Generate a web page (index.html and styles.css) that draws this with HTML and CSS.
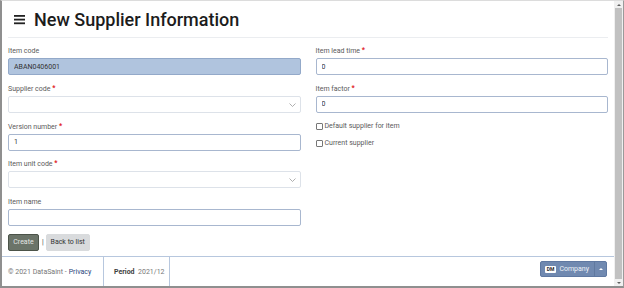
FILE: index.html
```html
<!DOCTYPE html>
<html lang="en">

<head>
    <meta charset="UTF-8">
    <meta name="viewport" content="width=device-width, initial-scale=1.0">
    <title>New Supplier Information</title>
    <link rel="stylesheet" href="styles.css">
</head>

<body>
    <div class="window">
        <div class="page">
            <div class="content">
                <header class="page-header">
                    <svg class="menu-icon" viewBox="0 0 11 10" aria-hidden="true">
                        <rect x="0" y="0" width="11" height="1.8" fill="#222"/>
                        <rect x="0" y="3.7" width="11" height="1.8" fill="#222"/>
                        <rect x="0" y="7.4" width="11" height="1.8" fill="#222"/>
                    </svg>
                    <h1>New Supplier Information</h1>
                </header>

                <form class="form">
                    <div class="col">
                        <div class="field">
                            <label for="itemCode">Item code</label>
                            <input type="text" id="itemCode" class="input readonly" value="ABAN0406001" readonly>
                        </div>

                        <div class="field">
                            <label for="supplierCode">Supplier code <span class="req">*</span></label>
                            <div class="select-wrap">
                                <select id="supplierCode" class="input select"></select>
                                <svg class="chevron" viewBox="0 0 7 4"><path d="M0.5 0.5 L3.5 3.5 L6.5 0.5" fill="none" stroke="#9a9a9a" stroke-width="0.8"/></svg>
                            </div>
                        </div>

                        <div class="field">
                            <label for="version">Version number <span class="req">*</span></label>
                            <input type="number" id="version" class="input" value="1">
                        </div>

                        <div class="field">
                            <label for="unitCode">Item unit code <span class="req">*</span></label>
                            <div class="select-wrap">
                                <select id="unitCode" class="input select"></select>
                                <svg class="chevron" viewBox="0 0 7 4"><path d="M0.5 0.5 L3.5 3.5 L6.5 0.5" fill="none" stroke="#9a9a9a" stroke-width="0.8"/></svg>
                            </div>
                        </div>

                        <div class="field">
                            <label for="itemName">Item name</label>
                            <input type="text" id="itemName" class="input">
                        </div>

                        <div class="actions">
                            <button type="button" class="btn btn-create">Create</button>
                            <span class="sep">|</span>
                            <a href="#" class="btn btn-back">Back to list</a>
                        </div>
                    </div>

                    <div class="col">
                        <div class="field">
                            <label for="leadTime">Item lead time <span class="req">*</span></label>
                            <input type="number" id="leadTime" class="input" value="0">
                        </div>

                        <div class="field">
                            <label for="factor">Item factor <span class="req">*</span></label>
                            <input type="number" id="factor" class="input" value="0">
                        </div>

                        <label class="check"><input type="checkbox"> Default supplier for item</label>
                        <label class="check"><input type="checkbox"> Current supplier</label>
                    </div>
                </form>
            </div>

            <footer class="footer">
                <div class="footer-cell copy">&copy; 2021 DataSaint - <a href="#">Privacy</a></div>
                <div class="footer-cell period"><b>Period</b>&nbsp; 2021/12</div>
                <div class="footer-right">
                    <div class="company">
                        <span class="company-main"><span class="badge">DM</span>Company</span>
                        <span class="company-caret"><span class="caret"></span></span>
                    </div>
                </div>
            </footer>
        </div>

        <div class="scrollbar">
            <span class="arrow up"></span>
            <div class="thumb"></div>
            <span class="arrow down"></span>
        </div>
    </div>
</body>

</html>
```

FILE: styles.css
```css
body {
    margin: 0;
    font-family: Roboto, 'Open Sans', sans-serif;
    font-size: 7px;
    color: #5a5a5a;
    overflow: hidden;
    background: #fff;
}

.window {
    width: 624px;
    height: 288px;
    box-sizing: border-box;
    display: flex;
    border-top: 1px solid #dcdcdc;
    border-left: 2px solid #8f8f8f;
    border-right: 1px solid #9a9a9a;
    border-bottom: 2px solid #8f8f8f;
}

.page {
    flex: 1;
    min-width: 0;
    display: flex;
    flex-direction: column;
}

.content {
    flex: 1;
    padding: 0 6px;
}

.page-header {
    height: 36px;
    display: flex;
    align-items: center;
    padding-left: 6px;
    border-bottom: 1px solid #ebedf0;
}

.menu-icon {
    width: 11px;
    height: 10px;
    margin: 2px 9px 0 0;
}

h1 {
    margin: 0;
    font-size: 18px;
    font-weight: 500;
    color: #1c1c1c;
}

.form {
    display: grid;
    grid-template-columns: 1fr 1fr;
    column-gap: 15px;
    padding-top: 7px;
}

.field {
    margin-bottom: 7.75px;
}

.field label {
    display: block;
    height: 12px;
    line-height: 12px;
    margin-bottom: 1px;
}

.req {
    color: #e0161b;
    font-weight: bold;
    position: relative;
    top: -1px;
}

.input {
    display: block;
    width: 100%;
    height: 17px;
    margin: 0;
    box-sizing: border-box;
    border: 1px solid #a8b7cf;
    border-radius: 2px;
    padding: 0 5px;
    font-family: Roboto, 'Open Sans', sans-serif;
    font-size: 7px;
    color: #333;
    background: #fff;
    outline: none;
}

.readonly {
    background-color: #b0c4de;
    border-color: #93a9c9;
}

.select-wrap {
    position: relative;
}

.select {
    appearance: none;
    border-color: #dde2e9;
}

.chevron {
    position: absolute;
    right: 5px;
    top: 7px;
    width: 7px;
    height: 4px;
}

.actions {
    display: flex;
    align-items: center;
}

.btn {
    display: flex;
    align-items: center;
    justify-content: center;
    height: 17px;
    box-sizing: border-box;
    padding: 0;
    border-radius: 2px;
    font-family: Roboto, 'Open Sans', sans-serif;
    font-size: 7px;
    text-decoration: none;
    cursor: pointer;
}

.btn-create {
    width: 31px;
    background-color: #6b7469;
    border: 1px solid #4b5349;
    color: #e4e6e4;
}

.sep {
    margin: 0 2px 0 3px;
    color: #444;
}

.btn-back {
    width: 44px;
    background-color: #d9dbdd;
    border: 1px solid #d9dbdd;
    color: #333;
}

.check {
    display: flex;
    align-items: center;
    height: 11px;
    margin-bottom: 6px;
}

.check input {
    appearance: none;
    width: 7px;
    height: 7px;
    margin: 0 2px 0 0;
    border: 1px solid #777;
    border-radius: 1px;
    background: #fff;
}

.footer {
    height: 30px;
    box-sizing: border-box;
    display: flex;
    border-top: 1px solid #b7c7de;
    color: #767676;
}

.footer-cell {
    display: flex;
    align-items: center;
    box-sizing: border-box;
    border-right: 1px solid #b7c7de;
}

.copy {
    width: 102px;
    padding-left: 6px;
}

.copy a {
    color: #2a467c;
    text-decoration: none;
    margin-left: 2px;
}

.period {
    width: 66px;
    padding-left: 10px;
}

.period b {
    color: #3e3e3e;
}

.footer-right {
    flex: 1;
    display: flex;
    justify-content: flex-end;
    align-items: flex-start;
    padding: 4px 7px 0 0;
}

.company {
    display: flex;
    height: 16px;
    box-sizing: border-box;
    border: 1px solid #5f78a1;
    border-radius: 2px;
    background-color: #7089b0;
    color: #eef2f8;
}

.company-main {
    display: flex;
    align-items: center;
    gap: 3px;
    padding: 0 5px 0 4px;
    border-right: 1px solid #60799f;
}

.badge {
    background: #fff;
    color: #2b2b2b;
    font-weight: bold;
    font-size: 5px;
    line-height: 7px;
    padding: 0 2px;
    border-radius: 1px;
}

.company-caret {
    width: 11px;
    display: flex;
    align-items: center;
    justify-content: center;
}

.caret {
    width: 0;
    height: 0;
    border-left: 2px solid transparent;
    border-right: 2px solid transparent;
    border-bottom: 2px solid #fff;
}

.scrollbar {
    width: 9px;
    display: flex;
    flex-direction: column;
    align-items: center;
    background: #f0f0f0;
}

.thumb {
    flex: 1;
    width: 7px;
    background: #c1c1c1;
}

.arrow {
    height: 7px;
    display: flex;
    align-items: center;
}

.arrow::before {
    content: "";
    border-left: 2px solid transparent;
    border-right: 2px solid transparent;
}

.arrow.up::before {
    border-bottom: 2px solid #606060;
}

.arrow.down::before {
    border-top: 2px solid #606060;
}
```
